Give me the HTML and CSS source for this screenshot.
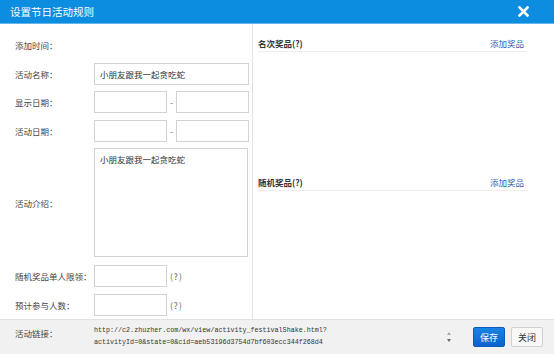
FILE: index.html
```html
<!DOCTYPE html>
<html lang="zh-CN">
<head>
  <meta charset="UTF-8" />
  <title>设置节日活动规则</title>
  <link rel="stylesheet" href="styles.css">
</head>
<body>
  <div class="dialog">
    <div class="dialog-head">
      <span class="dialog-title">设置节日活动规则</span>
      <a class="dialog-close" title="关闭">
        <svg width="11" height="11" viewBox="0 0 11 11">
          <path d="M1.5 1.5 L9.5 9.5 M9.5 1.5 L1.5 9.5" stroke="#fff" stroke-width="2.6" stroke-linecap="square" />
        </svg>
      </a>
    </div>

    <div class="dialog-body">
      <div class="form-col">
        <div class="row">
          <label class="label">添加时间：</label>
          <span class="value"></span>
        </div>
        <div class="row">
          <label class="label">活动名称：</label>
          <input class="field field-long" type="text" value="小朋友跟我一起贪吃蛇" />
        </div>
        <div class="row">
          <label class="label">显示日期：</label>
          <input class="field field-short" type="text" />
          <span class="dash">-</span>
          <input class="field field-short" type="text" />
        </div>
        <div class="row">
          <label class="label">活动日期：</label>
          <input class="field field-short" type="text" />
          <span class="dash">-</span>
          <input class="field field-short" type="text" />
        </div>
        <div class="row row-tall">
          <label class="label">活动介绍：</label>
          <textarea class="field field-area">小朋友跟我一起贪吃蛇</textarea>
        </div>
        <div class="row row-after-area">
          <label class="label">随机奖品单人限领：</label>
          <input class="field field-short" type="text" />
          <span class="hint">(?)</span>
        </div>
        <div class="row">
          <label class="label">预计参与人数：</label>
          <input class="field field-short" type="text" />
          <span class="hint">(?)</span>
        </div>
      </div>

      <div class="prize-col">
        <div class="prize-section prize-rank">
          <div class="prize-head">
            <strong>名次奖品(?)</strong>
            <a class="prize-add">添加奖品</a>
          </div>
        </div>
        <div class="prize-section">
          <div class="prize-head">
            <strong>随机奖品(?)</strong>
            <a class="prize-add">添加奖品</a>
          </div>
        </div>
      </div>
    </div>

    <div class="dialog-foot">
      <span class="label foot-label">活动链接：</span>
      <div class="link-text">http://c2.zhuzher.com/wx/view/activity_festivalShake.html?<br>activityId=0&amp;state=0&amp;cid=aeb53196d3754d7bf603ecc344f268d4</div>
      <div class="spinner">
        <span class="arrow-up"></span>
        <span class="arrow-down"></span>
      </div>
      <button class="btn btn-save">保存</button>
      <button class="btn btn-close">关闭</button>
    </div>
  </div>
</body>
</html>
```

FILE: styles.css
```css
body {
  margin: 0;
  font-family: "Noto Sans CJK SC", "Liberation Sans", sans-serif;
  font-size: 8.5px;
  color: #444;
  background: #fff;
}
.dialog {
  width: 554px;
  height: 354px;
  display: flex;
  flex-direction: column;
}
.dialog-head {
  height: 24px;
  background: #0d8de0;
  border-bottom: 1px solid #62b6ec;
  display: flex;
  align-items: center;
  justify-content: space-between;
  padding: 0 25px 0 10px;
  box-sizing: border-box;
}
.dialog-title {
  color: #fff;
  font-size: 10.5px;
}
.dialog-close {
  display: flex;
  cursor: pointer;
}
.dialog-body {
  flex: 1;
  display: flex;
}
.form-col {
  width: 253px;
  border-right: 1px solid #e3e3e3;
  padding: 10px 0 0 15px;
  box-sizing: border-box;
  display: flex;
  flex-direction: column;
  gap: 6.5px;
}
.row {
  height: 22px;
  display: flex;
  align-items: center;
}
.row-tall {
  height: 109px;
}
.row-after-area {
  margin-top: 1.5px;
}
.label {
  width: 79px;
  flex-shrink: 0;
  white-space: nowrap;
}
.field {
  height: 22px;
  box-sizing: border-box;
  border: 1px solid #d2d2d2;
  padding: 0 5px;
  font-family: inherit;
  font-size: 8.5px;
  color: #333;
  outline: none;
  background: #fff;
}
.field-long {
  width: 155px;
}
.field-short {
  width: 73px;
}
.field-area {
  width: 154px;
  height: 109px;
  padding: 4px 5px;
  resize: none;
}
.dash {
  width: 9px;
  text-align: center;
  color: #666;
}
.hint {
  margin-left: 3px;
  letter-spacing: 1px;
  color: #666;
}
.prize-col {
  flex: 1;
  padding: 11px 27px 0 5px;
}
.prize-rank {
  height: 139px;
}
.prize-head {
  height: 17px;
  border-bottom: 1px solid #eeeeee;
  display: flex;
  align-items: center;
  justify-content: space-between;
  padding-right: 3px;
  box-sizing: border-box;
}
.prize-head strong {
  color: #333;
}
.prize-add {
  color: #2d62b0;
  cursor: pointer;
}
.dialog-foot {
  height: 35px;
  box-sizing: border-box;
  background: #f1f1f1;
  border-top: 1px solid #e2e2e2;
  display: flex;
  align-items: center;
  padding: 0 9px 0 15px;
}
.foot-label {
  margin-bottom: 8px;
}
.link-text {
  font-family: "Liberation Mono", monospace;
  font-size: 6.7px;
  line-height: 12px;
  color: #333;
  width: 351px;
  white-space: nowrap;
  margin-bottom: 2px;
}
.spinner {
  width: 8px;
  display: flex;
  flex-direction: column;
  align-items: center;
  gap: 4px;
  margin-right: 20px;
}
.arrow-up, .arrow-down {
  width: 0;
  height: 0;
  border-left: 2px solid transparent;
  border-right: 2px solid transparent;
}
.arrow-up {
  border-bottom: 3px solid #aaa;
}
.arrow-down {
  border-top: 3px solid #666;
}
.btn {
  height: 20px;
  width: 32px;
  font-family: inherit;
  font-size: 9px;
  border-radius: 2px;
  padding: 0;
  cursor: pointer;
}
.btn-save {
  background: linear-gradient(#1b84e4, #0a62cc);
  border: 1px solid #0a5bbd;
  color: #fff;
}
.btn-close {
  margin-left: 6px;
  background: #f8f8f8;
  border: 1px solid #d0d0d0;
  color: #333;
}
```
